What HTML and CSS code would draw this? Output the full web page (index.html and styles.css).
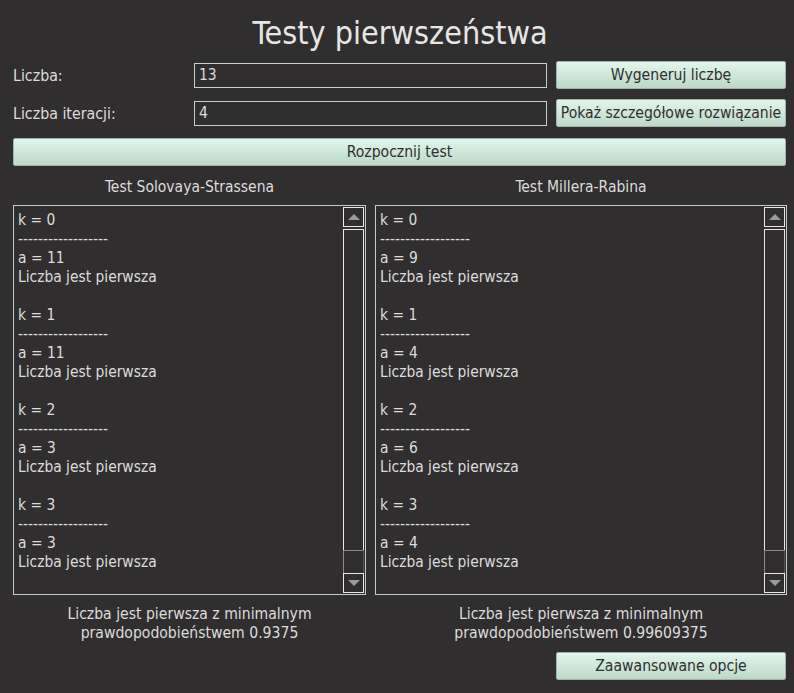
FILE: index.html
```html
<!DOCTYPE html>
<html lang="pl">
<head>
<meta charset="utf-8">
<link rel="stylesheet" href="styles.css">
</head>
<body>
<div class="app">
  <h1 class="title">Testy pierwszeństwa</h1>
  <div class="form">
    <label class="label">Liczba:</label>
    <div class="input">13</div>
    <button class="btn">Wygeneruj liczbę</button>
    <label class="label">Liczba iteracji:</label>
    <div class="input">4</div>
    <button class="btn">Pokaż szczegółowe rozwiązanie</button>
  </div>
  <button class="btn btn-wide">Rozpocznij test</button>
  <div class="panels">
    <div class="col col-left">
      <div class="col-title">Test Solovaya-Strassena</div>
      <div class="box">
        <div class="text">k = 0
------------------
a = 11
Liczba jest pierwsza

k = 1
------------------
a = 11
Liczba jest pierwsza

k = 2
------------------
a = 3
Liczba jest pierwsza

k = 3
------------------
a = 3
Liczba jest pierwsza</div>
        <div class="scroll">
          <div class="sb-btn"><span class="tri-up"></span></div>
          <div class="sb-handle"></div>
          <div class="sb-track"></div>
          <div class="sb-btn"><span class="tri-down"></span></div>
        </div>
      </div>
      <div class="result">Liczba jest pierwsza z minimalnym<br>prawdopodobieństwem 0.9375</div>
    </div>
    <div class="col col-right">
      <div class="col-title">Test Millera-Rabina</div>
      <div class="box">
        <div class="text">k = 0
------------------
a = 9
Liczba jest pierwsza

k = 1
------------------
a = 4
Liczba jest pierwsza

k = 2
------------------
a = 6
Liczba jest pierwsza

k = 3
------------------
a = 4
Liczba jest pierwsza</div>
        <div class="scroll">
          <div class="sb-btn"><span class="tri-up"></span></div>
          <div class="sb-handle"></div>
          <div class="sb-track"></div>
          <div class="sb-btn"><span class="tri-down"></span></div>
        </div>
      </div>
      <div class="result">Liczba jest pierwsza z minimalnym<br>prawdopodobieństwem 0.99609375</div>
      <div class="footer">
        <button class="btn btn-adv">Zaawansowane opcje</button>
      </div>
    </div>
  </div>
</div>
</body>
</html>
```
FILE: styles.css
```css
html, body {
  margin: 0;
  padding: 0;
  background: #312e2f;
}
body {
  width: 794px;
  height: 693px;
  overflow: hidden;
  font-family: "DejaVu Sans Condensed", "DejaVu Sans", sans-serif;
  color: #dcdcdc;
}
.app {
  padding: 0 7px 0 13px;
}
.title {
  margin: 0;
  height: 61px;
  padding-top: 15px;
  box-sizing: border-box;
  text-align: center;
  font-weight: normal;
  font-size: 32px;
  line-height: 36px;
  color: #e6e6e6;
  padding-left: 0;
}
.form {
  display: grid;
  grid-template-columns: 172px 353px 230px;
  column-gap: 9px;
  row-gap: 10px;
  align-items: center;
}
.label {
  font-size: 15.8px;
  color: #dcdcdc;
}
.input {
  height: 25px;
  box-sizing: border-box;
  border: 1px solid #c3d2c8;
  padding: 0 4px;
  font-size: 15.5px;
  line-height: 23px;
  color: #dcdcdc;
}
.btn {
  height: 28px;
  border: 1px solid #9fb4a8;
  border-radius: 2px;
  background: linear-gradient(#e2f6ec, #bcd8c9);
  color: #2e2e2e;
  font-family: "DejaVu Sans Condensed", "DejaVu Sans", sans-serif;
  font-size: 15.6px;
  padding: 0;
  box-sizing: border-box;
  white-space: nowrap;
}
.btn-wide {
  display: block;
  width: 773px;
  margin-top: 11px;
}
.panels {
  display: flex;
  gap: 9px;
  margin-top: 10px;
}
.col-left { width: 353px; }
.col-right { width: 412px; }
.col-title {
  text-align: center;
  font-size: 15.5px;
  line-height: 20px;
  height: 28px;
  padding-top: 1px;
  color: #dcdcdc;
}
.box {
  height: 390px;
  box-sizing: border-box;
  border: 1px solid #c3cdc7;
  display: flex;
}
.text {
  flex: 1;
  white-space: pre;
  padding: 5px 0 0 4px;
  font-size: 15.4px;
  line-height: 19px;
  color: #dcdcdc;
  overflow: hidden;
}
.scroll {
  width: 21px;
  margin: 1px 1px 1px 0;
  display: flex;
  flex-direction: column;
}
.sb-btn {
  height: 20px;
  box-sizing: border-box;
  border: 1px solid #e8e8e8;
  display: flex;
  align-items: center;
  justify-content: center;
}
.sb-handle {
  flex: 1;
  margin-top: 2px;
  border: 1px solid #e8e8e8;
  border-bottom: 0;
}
.sb-track {
  height: 22px;
  border: 1px solid #8a8a8a;
  border-right-color: #555;
  border-bottom: 0;
}
.tri-up, .tri-down {
  width: 0;
  height: 0;
  border-left: 6px solid transparent;
  border-right: 6px solid transparent;
}
.tri-up { border-bottom: 6px solid #9a9a9a; }
.tri-down { border-top: 6px solid #9a9a9a; }
.result {
  text-align: center;
  font-size: 15.6px;
  line-height: 19px;
  margin-top: 10px;
  color: #dcdcdc;
}
.footer {
  display: flex;
  justify-content: flex-end;
  margin-top: 9px;
}
.btn-adv {
  width: 230px;
  margin-right: 1px;
}
```
